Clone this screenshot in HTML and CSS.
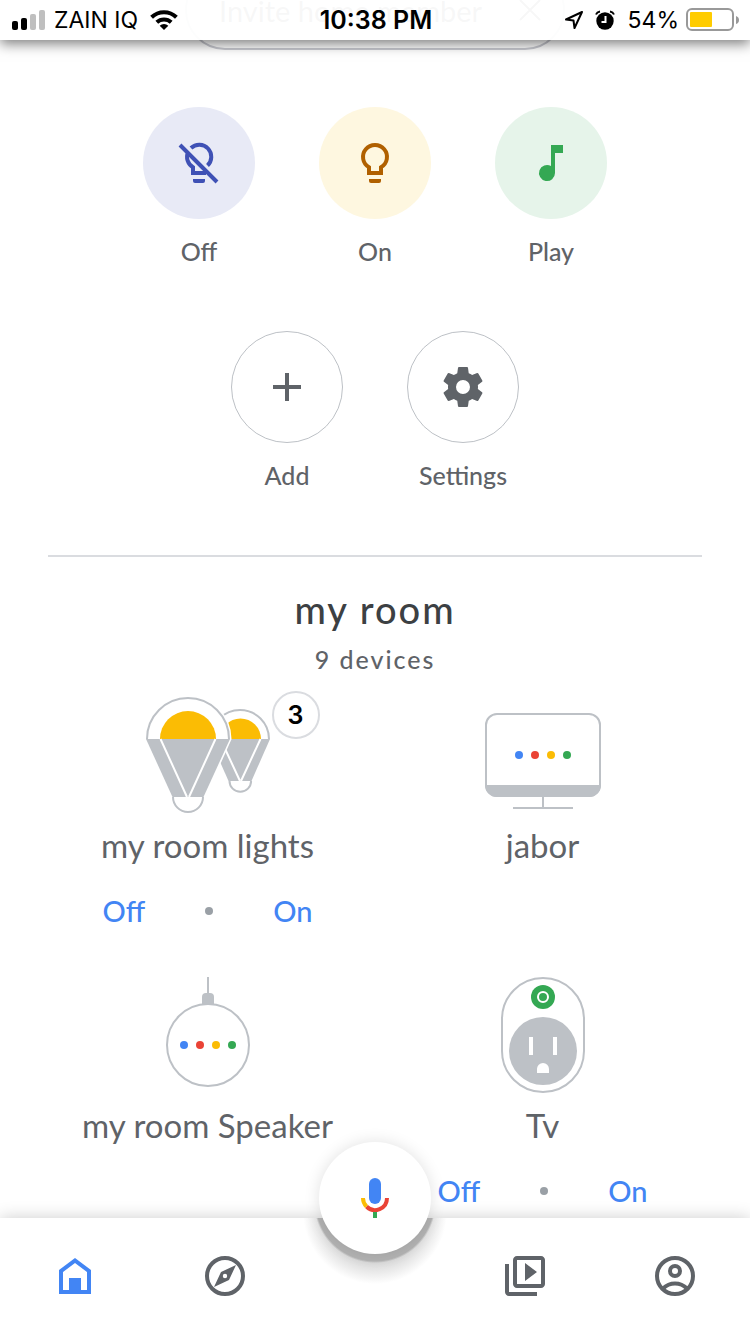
FILE: index.html
```html
<!DOCTYPE html>
<html lang="en">
<head>
<meta charset="utf-8">
<meta name="viewport" content="width=device-width, initial-scale=1">
<title>Home</title>
<link rel="stylesheet" href="styles.css">
</head>
<body>
<div class="app">
  <header class="status-bar">
    <div class="status-group">
      <svg class="signal" viewBox="0 0 34 20" aria-hidden="true">
        <rect x="0" y="11" width="6" height="9" rx="2"/>
        <rect x="9" y="8" width="6" height="12" rx="2"/>
        <rect class="weak" x="18" y="4" width="6" height="16" rx="2"/>
        <rect class="weak" x="27" y="0" width="6" height="20" rx="2"/>
      </svg>
      <span>ZAIN IQ</span>
      <svg class="wifi" viewBox="0 0 28 20" aria-hidden="true">
        <path d="M14 20l-4.300-4.300a6.500 6.500 0 0 1 8.600 0z"/>
        <path class="wave" d="M6.800 12.300a10.500 10.500 0 0 1 14.400 0M1.600 7.200a17.800 17.800 0 0 1 24.800 0"/>
      </svg>
    </div>
    <time class="clock">10:38 PM</time>
    <div class="status-group status-end">
      <svg class="locate" viewBox="0 0 20 20" aria-hidden="true"><path d="M18 2L2 9.500l7.500 1 1 7.500z"/></svg>
      <svg class="alarm" viewBox="0 0 20 20" aria-hidden="true">
        <circle cx="10" cy="11" r="8.700"/>
        <path class="bell" d="M1 4.500q1-2.500 4-3M19 4.500q-1-2.500-4-3"/>
        <path class="hands" d="M10.500 6v6H6.500"/>
      </svg>
      <span>54%</span>
      <svg class="battery" viewBox="0 0 54 24" aria-hidden="true">
        <rect class="shell" x="1" y="1" width="46" height="21" rx="5"/>
        <rect class="charge" x="4" y="4" width="22" height="15" rx="1"/>
        <path class="nub" d="M50 8q3 1 3 4t-3 4z"/>
      </svg>
    </div>
  </header>

  <main class="content">
    <button class="invite" type="button">
      <span>Invite home member</span>
      <svg class="close" viewBox="0 0 24 24" aria-hidden="true"><path d="M2 2l20 20M22 2L2 22"/></svg>
    </button>

    <section class="actions" aria-label="Quick actions">
      <button class="action" type="button">
        <span class="disc disc-off"><svg class="icon" viewBox="0 0 48 48" aria-hidden="true">
          <path class="line" d="M16 9A12 12 0 0 1 32.500 26.500M13 13.200A12 12 0 0 0 18 28.300V34H31M5 6l37 37"/>
          <path d="M18 40h12v2a2 2 0 0 1-2 2h-8a2 2 0 0 1-2-2z"/>
        </svg></span>
        <span>Off</span>
      </button>
      <button class="action" type="button">
        <span class="disc disc-on"><svg class="icon" viewBox="0 0 48 48" aria-hidden="true">
          <path class="line" d="M18 34V28.300A12 12 0 1 1 30 28.300V34z"/>
          <path d="M18 40h12v2a2 2 0 0 1-2 2h-8a2 2 0 0 1-2-2z"/>
        </svg></span>
        <span>On</span>
      </button>
      <button class="action" type="button">
        <span class="disc disc-play"><svg class="icon" viewBox="0 0 48 48" aria-hidden="true">
          <path d="M24 6v21.100a8 8 0 1 0 4 6.900V14h8V6z"/>
        </svg></span>
        <span>Play</span>
      </button>
    </section>
    <section class="actions" aria-label="Home actions">
      <button class="action" type="button">
        <span class="disc disc-plain"><svg class="icon" viewBox="0 0 48 48" aria-hidden="true"><path d="M22 10h4v12h12v4H26v12h-4V26H10v-4h12z"/></svg></span>
        <span>Add</span>
      </button>
      <button class="action" type="button">
        <span class="disc disc-plain"><svg class="icon" viewBox="0 0 24 24" aria-hidden="true"><path fill-rule="evenodd" d="M19.430 12.980c.04-.32.07-.64.07-.98s-.03-.66-.07-.98l2.110-1.650c.19-.15.24-.42.12-.64l-2-3.460c-.12-.22-.39-.3-.61-.22l-2.490 1c-.52-.4-1.080-.73-1.690-.98l-.38-2.650A.488.488 0 0 0 14 2h-4c-.25 0-.46.18-.49.42l-.38 2.650c-.61.25-1.170.59-1.690.98l-2.490-1c-.23-.09-.49 0-.61.22l-2 3.460c-.13.22-.07.49.12.64l2.110 1.650c-.04.32-.07.65-.07.98s.03.66.07.98l-2.110 1.650c-.19.15-.24.42-.12.64l2 3.460c.12.22.39.3.61.22l2.490-1c.52.4 1.080.73 1.690.98l.38 2.650c.03.24.24.42.49.42h4c.25 0 .46-.18.49-.42l.38-2.650c.61-.25 1.170-.59 1.690-.98l2.490 1c.23.09.49 0 .61-.22l2-3.460c.12-.22.07-.49-.12-.64zM12 15.500a3.500 3.500 0 1 1 0-7 3.500 3.500 0 0 1 0 7z"/></svg></span>
        <span>Settings</span>
      </button>
    </section>

    <section class="room">
      <h1 class="room-name">my room</h1>
      <p class="room-count">9 devices</p>
      <div class="devices">
        <article class="device">
          <div class="art">
            <svg viewBox="0 0 128 128" aria-hidden="true">
              <path class="outline" d="M67 50a29 29 0 0 1 58 0"/>
              <path class="yellow" d="M76 50a20.500 20.500 0 0 1 41 0z"/>
              <path class="grey" d="M66 50h60l-18.500 42h-23z"/>
              <path class="ray" d="M76.500 50L96 92M116.500 50L97 92"/>
              <path class="outline" d="M85.500 92a10.800 10.800 0 0 0 21.600 0"/>
              <path class="mask" d="M2 50a42 42 0 0 1 84 0L60 108H28z"/>
              <path class="outline" d="M3 50a41 41 0 0 1 82 0"/>
              <path class="yellow" d="M16 50a28 28 0 0 1 56 0z"/>
              <path class="grey" d="M2 50h84l-26.500 58h-31z"/>
              <path class="ray" d="M16.500 50L43 108M71.500 50L45 108"/>
              <path class="outline" d="M29 108a15 15 0 0 0 30 0"/>
            </svg>
            <span class="badge">3</span>
          </div>
          <h2 class="device-name">my room lights</h2>
          <div class="switch"><button type="button">Off</button><span class="dot"></span><button type="button">On</button></div>
        </article>
        <article class="device">
          <div class="art"><svg viewBox="0 0 128 128" aria-hidden="true">
            <rect class="outline" x="7" y="25" width="114" height="82" rx="11"/>
            <path class="grey" d="M6 96h116a12 12 0 0 1-12 12H18A12 12 0 0 1 6 96z"/>
            <path class="outline" d="M64 108v11M34 119h60"/>
            <circle class="blue" cx="40" cy="66" r="4"/><circle class="red" cx="56" cy="66" r="4"/><circle class="yellow" cx="72" cy="66" r="4"/><circle class="green" cx="88" cy="66" r="4"/>
          </svg></div>
          <h2 class="device-name">jabor</h2>
        </article>
        <article class="device">
          <div class="art"><svg viewBox="0 0 128 128" aria-hidden="true">
            <path class="outline" d="M64 8v17"/>
            <path class="grey" d="M58 35v-7a4 4 0 0 1 4-4h4a4 4 0 0 1 4 4v7z"/>
            <circle class="outline" cx="64" cy="76" r="41"/>
            <circle class="blue" cx="40" cy="76" r="4"/><circle class="red" cx="56" cy="76" r="4"/><circle class="yellow" cx="72" cy="76" r="4"/><circle class="green" cx="88" cy="76" r="4"/>
          </svg></div>
          <h2 class="device-name">my room Speaker</h2>
        </article>
        <article class="device">
          <div class="art"><svg viewBox="0 0 128 128" aria-hidden="true">
            <rect class="outline" x="23" y="9" width="82" height="114" rx="41"/>
            <circle class="green" cx="64" cy="28" r="12"/>
            <circle class="ray" cx="64" cy="28" r="5"/>
            <circle class="grey" cx="64" cy="82" r="34"/>
            <path class="white" d="M50 68h4v18h-4zM74 68h4v18h-4zM58 104v-4a6 6 0 0 1 12 0v4z"/>
          </svg></div>
          <h2 class="device-name">Tv</h2>
          <div class="switch"><button type="button">Off</button><span class="dot"></span><button type="button">On</button></div>
        </article>
      </div>
    </section>
  </main>

  <nav class="tabs" aria-label="Main">
    <a class="tab tab-current" href="#home" aria-label="Home" aria-current="page"><svg class="icon" viewBox="0 0 48 48" aria-hidden="true"><path fill-rule="evenodd" d="M24 6l16 12v24H8V18zM24 11L12 20v18h6V26h12v12h6V20z"/><path d="M18 26h12v14H18z"/></svg></a>
    <a class="tab" href="#discover" aria-label="Discover"><svg class="icon" viewBox="0 0 48 48" aria-hidden="true"><circle class="line" cx="24" cy="24" r="18"/><path fill-rule="evenodd" d="M35 13l-7 15-15 7 7-15zM24 21.800a2.200 2.200 0 1 0 0 4.400 2.200 2.200 0 0 0 0-4.400z"/></svg></a>
    <div class="tab">
      <button class="mic" type="button" aria-label="Ask by voice"><svg class="icon" viewBox="0 0 48 48" aria-hidden="true">
        <rect class="blue" x="18" y="4" width="12" height="26" rx="6"/>
        <path class="arc arc-red" d="M36 24a12 12 0 0 1-20.500 8.500"/>
        <path class="arc arc-yellow" d="M12 24a12 12 0 0 0 3.500 8.500"/>
        <path class="green" d="M22 38h4v6h-4z"/>
      </svg></button>
    </div>
    <a class="tab" href="#media" aria-label="Media"><svg class="icon" viewBox="0 0 24 24" aria-hidden="true"><path fill-rule="evenodd" d="M4 6H2v14c0 1.100.9 2 2 2h14v-2H4zM20 2H8c-1.100 0-2 .9-2 2v12c0 1.100.9 2 2 2h12c1.100 0 2-.9 2-2V4c0-1.100-.9-2-2-2zM20 16H8V4h12zM12 5.500v9l6-4.500z"/></svg></a>
    <a class="tab" href="#account" aria-label="Account"><svg class="icon" viewBox="0 0 48 48" aria-hidden="true"><circle class="line" cx="24" cy="24" r="18"/><circle class="line" cx="24" cy="19" r="5"/><path class="line" d="M12 36.500q5-5 12-5t12 5"/></svg></a>
  </nav>
</div>
</body>
</html>
```
FILE: styles.css
```css
* { box-sizing: border-box; }

body {
  margin: 0;
  background: #fff;
  color: #5f6368;
  font-family: Lato, "Open Sans", sans-serif;
}

button {
  padding: 0;
  border: 0;
  background: none;
  color: inherit;
  font: inherit;
  cursor: pointer;
}

svg { display: block; fill: currentColor; }

.app {
  display: flex;
  flex-direction: column;
  min-height: 100vh;
}

/* Status bar */
.status-bar {
  position: sticky;
  top: 0;
  z-index: 2;
  display: grid;
  grid-template-columns: 1fr auto 1fr;
  align-items: center;
  height: 40px;
  padding: 0 10px 0 12px;
  background: rgba(255, 255, 255, 0.95);
  box-shadow: 0 4px 12px rgba(0, 0, 0, 0.5);
  color: #000;
  font-family: Inter, "Liberation Sans", sans-serif;
  font-size: 23px;
}
.status-group { display: flex; align-items: center; gap: 8px; }
.status-end { justify-content: flex-end; }
.clock { font-size: 25px; font-weight: 600; }
.signal { width: 34px; height: 20px; }
.weak { fill: #bfbfbf; }
.wifi { width: 28px; height: 20px; margin-left: 4px; }
.wave { fill: none; stroke: #000; stroke-width: 4; }
.locate { width: 20px; height: 20px; fill: none; stroke: #000; stroke-width: 2; stroke-linejoin: round; }
.alarm { width: 20px; height: 20px; margin: 0 6px 0 4px; }
.bell { fill: none; stroke: #000; stroke-width: 2; }
.hands { fill: none; stroke: #fff; stroke-width: 2; }
.status-end { gap: 7px; }
.battery { width: 54px; height: 24px; }
.shell { fill: none; stroke: #999; stroke-width: 2; }
.charge { fill: #fc0; }
.nub { fill: #999; }

/* Scrolled content */
.content {
  display: flex;
  flex: 1;
  flex-direction: column;
  align-items: center;
}
.invite {
  display: flex;
  align-items: center;
  justify-content: space-between;
  width: 380px;
  height: 80px;
  margin-top: -70px;
  padding: 0 21px 0 32px;
  border: 2px solid #c9cad1;
  border-radius: 40px;
  font-size: 29px;
  color: #5f6368;
}
.close { width: 24px; height: 24px; stroke: currentColor; stroke-width: 2; }

.actions { display: flex; justify-content: center; gap: 64px; margin-top: 57px; }
.action {
  display: flex;
  flex-direction: column;
  align-items: center;
  gap: 16px;
  width: 112px;
  font-size: 25px;
  font-weight: 500;
  line-height: 32px;
}
.disc {
  display: grid;
  place-items: center;
  width: 112px;
  height: 112px;
  border-radius: 50%;
}
.disc-off { background: #e8eaf6; color: #3f51b5; }
.disc-on { background: #fef7e0; color: #b06000; }
.disc-play { background: #e6f4ea; color: #34a853; }
.disc-plain { border: 1px solid #bdc1c6; }
.icon { width: 48px; height: 48px; }
.line { fill: none; stroke: currentColor; stroke-width: 4; }
.actions + .actions { margin-top: 64px; }

/* Room */
.room {
  align-self: stretch;
  margin: 64px 40px 0;
  text-align: center;
}
.room::before {
  content: "";
  display: block;
  height: 2px;
  margin: 0 8px;
  background: #dadce0;
}
.room-name {
  margin: 28px 0 0;
  color: #3c4043;
  font-size: 38px;
  font-weight: 500;
  line-height: 48px;
  letter-spacing: 2px;
}
.room-count {
  margin: 10px 0 14px;
  font-size: 25px;
  font-weight: 500;
  line-height: 32px;
  letter-spacing: 2px;
}
.devices { display: grid; grid-template-columns: 1fr 1fr; }
.device {
  display: flex;
  flex-direction: column;
  align-items: center;
  min-height: 280px;
}
.art { position: relative; width: 128px; height: 128px; }
.outline { fill: none; stroke: #bdc1c6; stroke-width: 2; }
.grey { fill: #bdc1c6; }
.ray { fill: none; stroke: #fff; stroke-width: 2; }
.mask { fill: #fff; stroke: #fff; stroke-width: 3; }
.white { fill: #fff; }
.blue { fill: #4285f4; }
.red { fill: #ea4335; }
.yellow { fill: #fbbc04; }
.green { fill: #34a853; }
.badge {
  position: absolute;
  top: 2px;
  left: 128px;
  width: 48px;
  height: 48px;
  border: 2px solid #dadce0;
  border-radius: 50%;
  background: #fff;
  color: #000;
  font-family: Inter, "Liberation Sans", sans-serif;
  font-size: 25px;
  font-weight: 600;
  line-height: 44px;
}
.device-name {
  margin: 8px 0 0;
  font-size: 33px;
  font-weight: 400;
  line-height: 40px;
}
.switch {
  display: flex;
  align-items: center;
  justify-content: space-between;
  width: 210px;
  margin-top: 26px;
  color: #4285f4;
  font-size: 29px;
  font-weight: 500;
  line-height: 40px;
}
.dot { width: 8px; height: 8px; border-radius: 50%; background: #9aa0a6; }

/* Bottom tabs */
.tabs {
  position: fixed;
  right: 0;
  bottom: 0;
  left: 0;
  display: grid;
  grid-template-columns: repeat(5, 1fr);
  height: 116px;
  background:
    radial-gradient(circle at 50% -16px, #b3b3b3 59px, transparent 61px),
    radial-gradient(circle at 50% -6px, #d4d4d4 48px, transparent 72px),
    #fff;
  box-shadow: 0 0 16px rgba(0, 0, 0, 0.2);
}
.tab { display: grid; place-items: center; position: relative; color: #5f6368; }
.tab-current { color: #4285f4; }
.mic {
  position: absolute;
  top: -76px;
  display: grid;
  place-items: center;
  width: 112px;
  height: 112px;
  border-radius: 50%;
  background: #fff;
  box-shadow: 0 0 16px rgba(0, 0, 0, 0.12);
}
.arc { fill: none; stroke-width: 4; }
.arc-red { stroke: #ea4335; }
.arc-yellow { stroke: #fbbc04; }
```
